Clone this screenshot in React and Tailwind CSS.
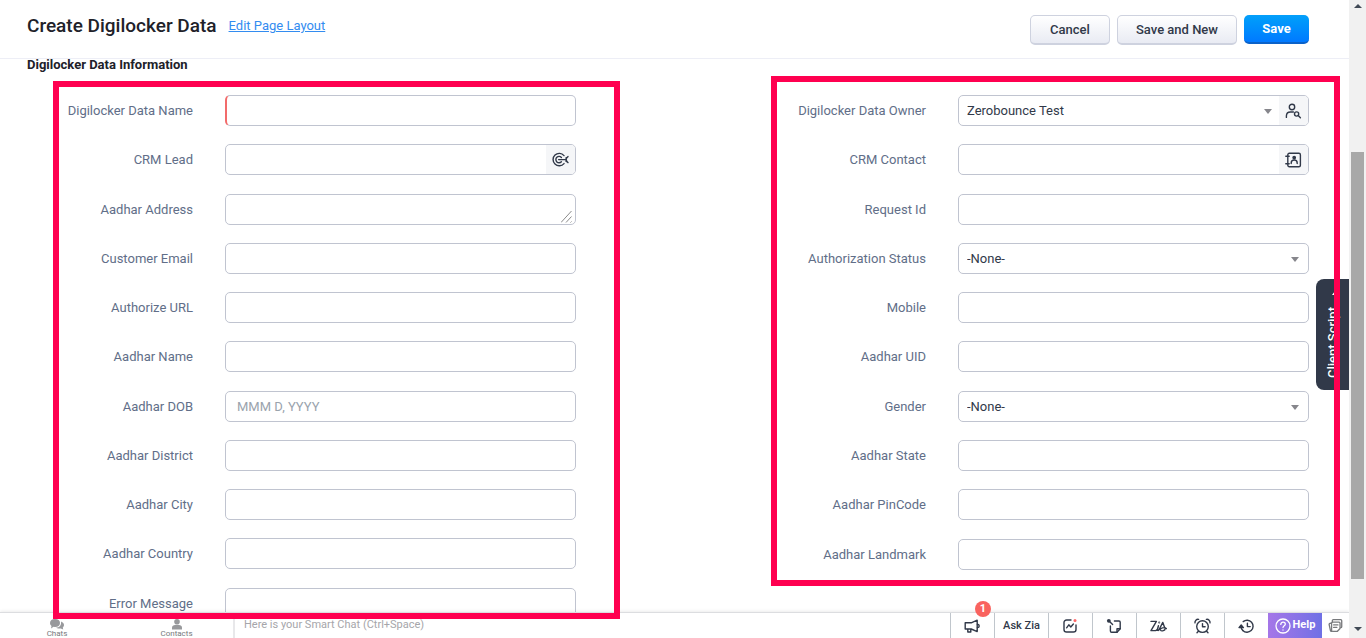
import React from 'react';

const LEFT_FIELDS = [
  { id: 'name', label: 'Digilocker Data Name', type: 'required' },
  { id: 'lead', label: 'CRM Lead', type: 'lookup', icon: 'target' },
  { id: 'address', label: 'Aadhar Address', type: 'textarea' },
  { id: 'email', label: 'Customer Email' },
  { id: 'authorize-url', label: 'Authorize URL' },
  { id: 'aadhar-name', label: 'Aadhar Name' },
  { id: 'dob', label: 'Aadhar DOB', placeholder: 'MMM D, YYYY' },
  { id: 'district', label: 'Aadhar District' },
  { id: 'city', label: 'Aadhar City' },
  { id: 'country', label: 'Aadhar Country' },
  { id: 'error', label: 'Error Message' }
];

const RIGHT_FIELDS = [
  { id: 'owner', label: 'Digilocker Data Owner', type: 'owner', value: 'Zerobounce Test' },
  { id: 'contact', label: 'CRM Contact', type: 'lookup', icon: 'contact' },
  { id: 'request-id', label: 'Request Id' },
  { id: 'status', label: 'Authorization Status', type: 'select', value: '-None-' },
  { id: 'mobile', label: 'Mobile' },
  { id: 'uid', label: 'Aadhar UID' },
  { id: 'gender', label: 'Gender', type: 'select', value: '-None-' },
  { id: 'state', label: 'Aadhar State' },
  { id: 'pincode', label: 'Aadhar PinCode' },
  { id: 'landmark', label: 'Aadhar Landmark' }
];

const ICONS = {
  target: (
    <>
      <path d="M12 3.6A6.2 6.2 0 1 0 12 11.600" />
      <path d="M9.400 5.400A3.200 3.200 0 1 0 9.400 9.800" />
      <path d="M6.600 7.600h7.500M16 4.600c-2.400 1.400-2.400 4.600 0 6M14.100 5.800v3.600" />
    </>
  ),
  contact: (
    <>
      <rect x="2.8" y="1.2" width="12.6" height="13.6" rx="1.5" />
      <path d="M.8 4.2h3.4M.8 11.8h3.4" />
      <circle cx="9.2" cy="5.6" r="1.2" fill="currentColor" />
      <path d="M6.2 11.6V11a3 3 0 0 1 6 0v.6" />
    </>
  ),
  person: (
    <>
      <circle cx="7" cy="4" r="2.7" />
      <path d="M1.4 14.4v-1.6A4 4 0 0 1 5.4 9h3" />
      <circle cx="11.6" cy="11" r="2.1" />
      <path d="m13.2 12.6 2.2 2.2" />
    </>
  ),
  megaphone: (
    <>
      <path d="M1.2 4.800h6l6-2.600v11.400l-6-2.600h-6zM3.800 11v3h3v-3" />
      <path d="M13.400 6.200c2.400.2 2.400 3.200 0 3.400" />
    </>
  ),
  signals: (
    <>
      <path d="M9 2H4.6A2.6 2.6 0 0 0 2 4.600V11.400A2.6 2.6 0 0 0 4.600 14H11.400A2.6 2.6 0 0 0 14 11.400V7" />
      <path d="m4.600 9.800 2.200-3 2 2.200 2.600-3" />
      <circle cx="13" cy="2.600" r="1.500" fill="#f66" stroke="none" />
    </>
  ),
  sticky: (
    <>
      <path d="M8.400 3h4.600A1.200 1.200 0 0 1 14.200 4.200v6.600L11 14.200H5.600a1.200 1.200 0 0 1-1.200-1.200V8" />
      <path d="M14.200 10.800H11v3.400M3 3l3.600 3.400" />
      <circle cx="2.800" cy="2.800" r="1.900" fill="currentColor" stroke="none" />
    </>
  ),
  zia: (
    <>
      <path d="M1 3.400h5.400L1 12.600h4.600c1.600-.4 2.400-2.400 2.800-4.800L7.400 11.400c-.2 1.200.8 1.400 1.600.4L12.800 4.400l2.200 6c.6 2.200-3.600 3.200-4.600 1.600-.8-1.800 4.400-3.400 6-1.400" />
      <circle cx="9.200" cy="4.400" r=".3" />
    </>
  ),
  alarm: (
    <>
      <circle cx="8.500" cy="8.600" r="5.800" />
      <path d="M8.500 5.600v3.200h2.600M1 4.800A3 3 0 0 1 4.600 1.400M16 4.800a3 3 0 0 0-3.600-3.400M4.400 13.200l-1.400 1.600M12.600 13.200l1.400 1.600" />
    </>
  ),
  history: (
    <>
      <path d="M5.200 3.600A6 6 0 1 1 4.800 12.400" />
      <path d="M1 9.600 3.200 7l2.200 2.600z" fill="currentColor" />
      <path d="M3.200 9.600c.2 1.200.8 2.200 1.600 2.800M9.400 5.200v3.400h2.800" />
    </>
  ),
  notes: (
    <>
      <path d="M4.600 4.400V2.800a1 1 0 0 1 1-1h8a1 1 0 0 1 1 1v6.400a1 1 0 0 1-1 1M3 5.600 2 5.800a1 1 0 0 0-.8 1.200l1.400 6.400a1 1 0 0 0 1.200.800" />
      <path d="M4.800 4.400h7a1 1 0 0 1 1 1v5.800L10 14.200H4.800a1 1 0 0 1-1-1V5.400a1 1 0 0 1 1-1zM6 7.400h4.600M6 10h3.400" />
    </>
  )
};

function Icon({ name, className = 'w-[17px] h-4 text-[#313949]' }) {
  return (
    <svg viewBox="0 0 17 16" className={className} fill="none" stroke="currentColor" strokeWidth="1.4" strokeLinecap="round" strokeLinejoin="round" aria-hidden="true">
      {ICONS[name]}
    </svg>
  );
}

function Caret({ className }) {
  return (
    <svg viewBox="0 0 8 5" className={className} fill="#86868c" aria-hidden="true">
      <path d="M0 0h8L4 5z" />
    </svg>
  );
}

const BOX = 'w-full h-[31px] border border-[#c0c4d0] rounded-[5px] bg-white text-[13px] text-[#313949] outline-none';

function Control({ field }) {
  const { id, type, value, icon, placeholder } = field;

  if (type === 'textarea') {
    return (
      <div className="relative">
        <textarea id={id} className={`${BOX} block resize-none px-2.5 py-1`} />
        <svg viewBox="0 0 11 12" className="absolute right-1 bottom-0.5 w-[11px] h-3" stroke="#8b8b8b" fill="none" aria-hidden="true">
          <path d="M0 11.500 10.500 0M5 11.500l5.500-6M9.500 11.500l1-1" />
        </svg>
      </div>
    );
  }
  if (type === 'lookup') {
    return (
      <div className={`${BOX} flex overflow-hidden`}>
        <input id={id} type="text" className="flex-1 min-w-0 px-2.5 outline-none" />
        <button type="button" aria-label={`Look up ${field.label}`} className="w-[29px] flex items-center justify-center bg-[#f5f6f8]">
          <Icon name={icon} />
        </button>
      </div>
    );
  }
  if (type === 'owner' || type === 'select') {
    return (
      <div className={`${BOX} flex overflow-hidden`}>
        <div className="relative flex-1">
          <select id={id} className="w-full h-full px-2 appearance-none outline-none">
            <option>{value}</option>
          </select>
          <Caret className={`absolute top-[13px] w-2 h-[5px] pointer-events-none ${type === 'owner' ? 'right-[7px]' : 'right-[9px]'}`} />
        </div>
        {type === 'owner' && (
          <button type="button" aria-label="Choose owner" className="w-[29px] flex items-center justify-center bg-[#f5f6f8]">
            <Icon name="person" />
          </button>
        )}
      </div>
    );
  }
  return (
    <input
      id={id}
      type="text"
      placeholder={placeholder}
      className={`${BOX} block px-[11px] placeholder:text-[#9aa3ad] ${type === 'required' ? 'border-l-2 border-l-[#f26b6b]' : ''}`}
    />
  );
}

function FieldColumn({ fields, className }) {
  return (
    <div className={`grid auto-rows-fr content-start ${className}`}>
      {fields.map((field) => (
        <div key={field.id} className="flex items-start gap-8">
          <label htmlFor={field.id} className="w-[166px] shrink-0 text-right text-[13px] leading-8 text-[#616e88]">
            {field.label}
          </label>
          <div className="flex-1 min-w-0">
            <Control field={field} />
          </div>
        </div>
      ))}
    </div>
  );
}

function Header() {
  const plain = 'h-[30px] border border-[#ced2df] border-b-2 rounded-[5px] bg-linear-to-b from-white to-[#e9ebf3] text-[13px] font-medium text-[#313949]';
  return (
    <header className="h-[59px] shrink-0 border-b border-[#edeef6] pl-[27px] pr-10 pt-0.5 flex items-center justify-between">
      <div className="flex items-center gap-3 pb-2">
        <h1 className="text-[19px] leading-6 font-medium text-[#212129]">Create Digilocker Data</h1>
        <a href="#layout" className="text-[13px] text-[#338cf0] underline">Edit Page Layout</a>
      </div>
      <div className="flex gap-[7px]">
        <button type="button" className={`${plain} w-20`}>Cancel</button>
        <button type="button" className={`${plain} w-[120px]`}>Save and New</button>
        <button type="button" className="w-[65px] h-[29px] rounded-[5px] border-b-2 border-[#0b62c9] bg-linear-to-b from-[#05a0fa] to-[#0279ff] text-[13px] font-bold text-white">
          Save
        </button>
      </div>
    </header>
  );
}

const TOOLS = ['signals', 'sticky', 'zia', 'alarm', 'history'];

function Footer() {
  const cell = 'w-11 border-l border-[#c0c6cc] flex items-center justify-center';
  return (
    <footer className="h-[26px] shrink-0 flex bg-white border-t border-[#dcdde0] shadow-[0_-1px_3px_rgba(0,0,0,0.08)]">
      <nav className="w-[235px] shrink-0 flex border-r-2 border-[#e8e8ea] text-[8px] leading-2 text-[#77797c]">
        <button type="button" className="w-[114px] shrink-0 flex flex-col items-center justify-end">
          <svg viewBox="0 0 14 11" className="w-3.5 h-[11px]" fill="#98999c" aria-hidden="true">
            <path d="M5 0c3 0 5 1.600 5 4S8 8 5 8l-1.500-.2L1 9.500l.5-2.600C.500 6.200 0 5.200 0 4c0-2.400 2-4 5-4z" />
            <path d="M11 2.500c2 .8 3 2 3 3.500 0 1-.5 1.800-1.200 2.400l.4 2.200-2.400-1.200C8.500 9.800 7 9.300 6 8.700c3.500 0 5.600-2.600 5-6.200z" />
          </svg>
          <span>Chats</span>
        </button>
        <button type="button" className="flex-1 pl-1.5 flex flex-col items-center justify-end">
          <svg viewBox="0 0 12 11" className="w-3 h-[11px]" fill="#98999c" aria-hidden="true">
            <circle cx="6" cy="2.800" r="2.800" />
            <path d="M1 10.500V8.600C1 7 2.500 6.200 4 6h4c1.500.2 3 1 3 2.600v1.900z" />
          </svg>
          <span>Contacts</span>
        </button>
      </nav>
      <input
        type="text"
        aria-label="Smart Chat"
        placeholder="Here is your Smart Chat (Ctrl+Space)"
        className="flex-1 min-w-0 h-[23px] px-[9px] text-[11px] outline-none placeholder:text-[#a6a6aa]"
      />
      <div className="flex shrink-0">
        <button type="button" aria-label="Announcements" className={`${cell} relative`}>
          <Icon name="megaphone" />
          <span className="absolute -top-3 left-6 w-4 h-4 rounded-full bg-[#f9635f] text-white text-[11px] leading-4 font-bold text-center">1</span>
        </button>
        <button type="button" className="w-[54px] border-l border-[#c0c6cc] pt-0.5 text-[11px] font-medium text-[#313949]">Ask Zia</button>
        {TOOLS.map((name) => (
          <button key={name} type="button" aria-label={name} className={cell}>
            <Icon name={name} />
          </button>
        ))}
        <button type="button" className="w-[54px] flex items-center justify-center gap-0.5 bg-linear-to-r from-[#a576e8] to-[#6f70e5] text-[11px] font-bold text-white">
          <svg viewBox="0 0 16 16" className="w-4 h-4" fill="none" stroke="#fff" strokeWidth="1.300" strokeLinecap="round" aria-hidden="true">
            <circle cx="8" cy="8" r="7" />
            <path d="M5.800 6.400C5.800 3.400 10.300 3.600 10.300 6.200 10.300 7.800 8 7.800 8 9.600M8 11.900v.1" />
          </svg>
          Help
        </button>
        <button type="button" aria-label="Notes" className="w-[27px] flex items-center justify-center">
          <Icon name="notes" className="w-4 h-[15px] text-[#77797c]" />
        </button>
      </div>
    </footer>
  );
}

function Scrollbar() {
  return (
    <div className="w-[17px] shrink-0 bg-[#f1f1f1] flex flex-col items-center pt-1 pb-[7px]">
      <svg viewBox="0 0 8 4" className="w-2 h-1" fill="#414a56" aria-hidden="true"><path d="M0 4h8L4 0z" /></svg>
      <div className="flex-1 flex flex-col w-[13px]">
        <div className="grow-[144]" />
        <div className="grow-[427] bg-[#a8a8a8]" />
        <div className="grow-[48]" />
      </div>
      <svg viewBox="0 0 8 4" className="w-2 h-1" fill="#414a56" aria-hidden="true"><path d="M0 0h8L4 4z" /></svg>
    </div>
  );
}

export default function App() {
  return (
    <div className="relative h-screen flex overflow-hidden bg-white font-[Roboto,sans-serif]">
      <div className="flex-1 min-w-0 flex flex-col">
        <Header />
        <main className="flex-1 min-h-0 overflow-hidden -mt-0.5 pl-[27px] pr-10">
          <h2 className="text-[13px] leading-4 font-bold text-[#212129]">Digilocker Data Information</h2>
          <form className="mt-[22px] grid grid-cols-2 gap-x-[184px] items-start">
            <FieldColumn fields={LEFT_FIELDS} className="min-h-[542px]" />
            <FieldColumn fields={RIGHT_FIELDS} className="min-h-[493px]" />
          </form>
        </main>
        <Footer />
      </div>
      <Scrollbar />

      {/* Side tab */}
      <button type="button" className="absolute right-[17px] top-[279px] w-[33px] h-[111px] rounded-l-lg bg-[#313949] text-white">
        <span className="absolute left-[7px] bottom-3 text-[13px] font-medium [writing-mode:vertical-rl] rotate-180">Client Script</span>
        <svg viewBox="0 0 6 4" className="absolute left-4 top-3 w-1.5 h-1" fill="#fff" aria-hidden="true"><path d="M0 4h6L3 0z" /></svg>
      </button>

      {/* Highlight frames */}
      <div className="absolute left-[53px] top-[81px] w-[567px] h-[538px] border-6 border-[#ff0050] pointer-events-none" />
      <div className="absolute right-[26px] top-[76px] w-[569px] h-[510px] border-6 border-[#ff0050] pointer-events-none" />
    </div>
  );
}
